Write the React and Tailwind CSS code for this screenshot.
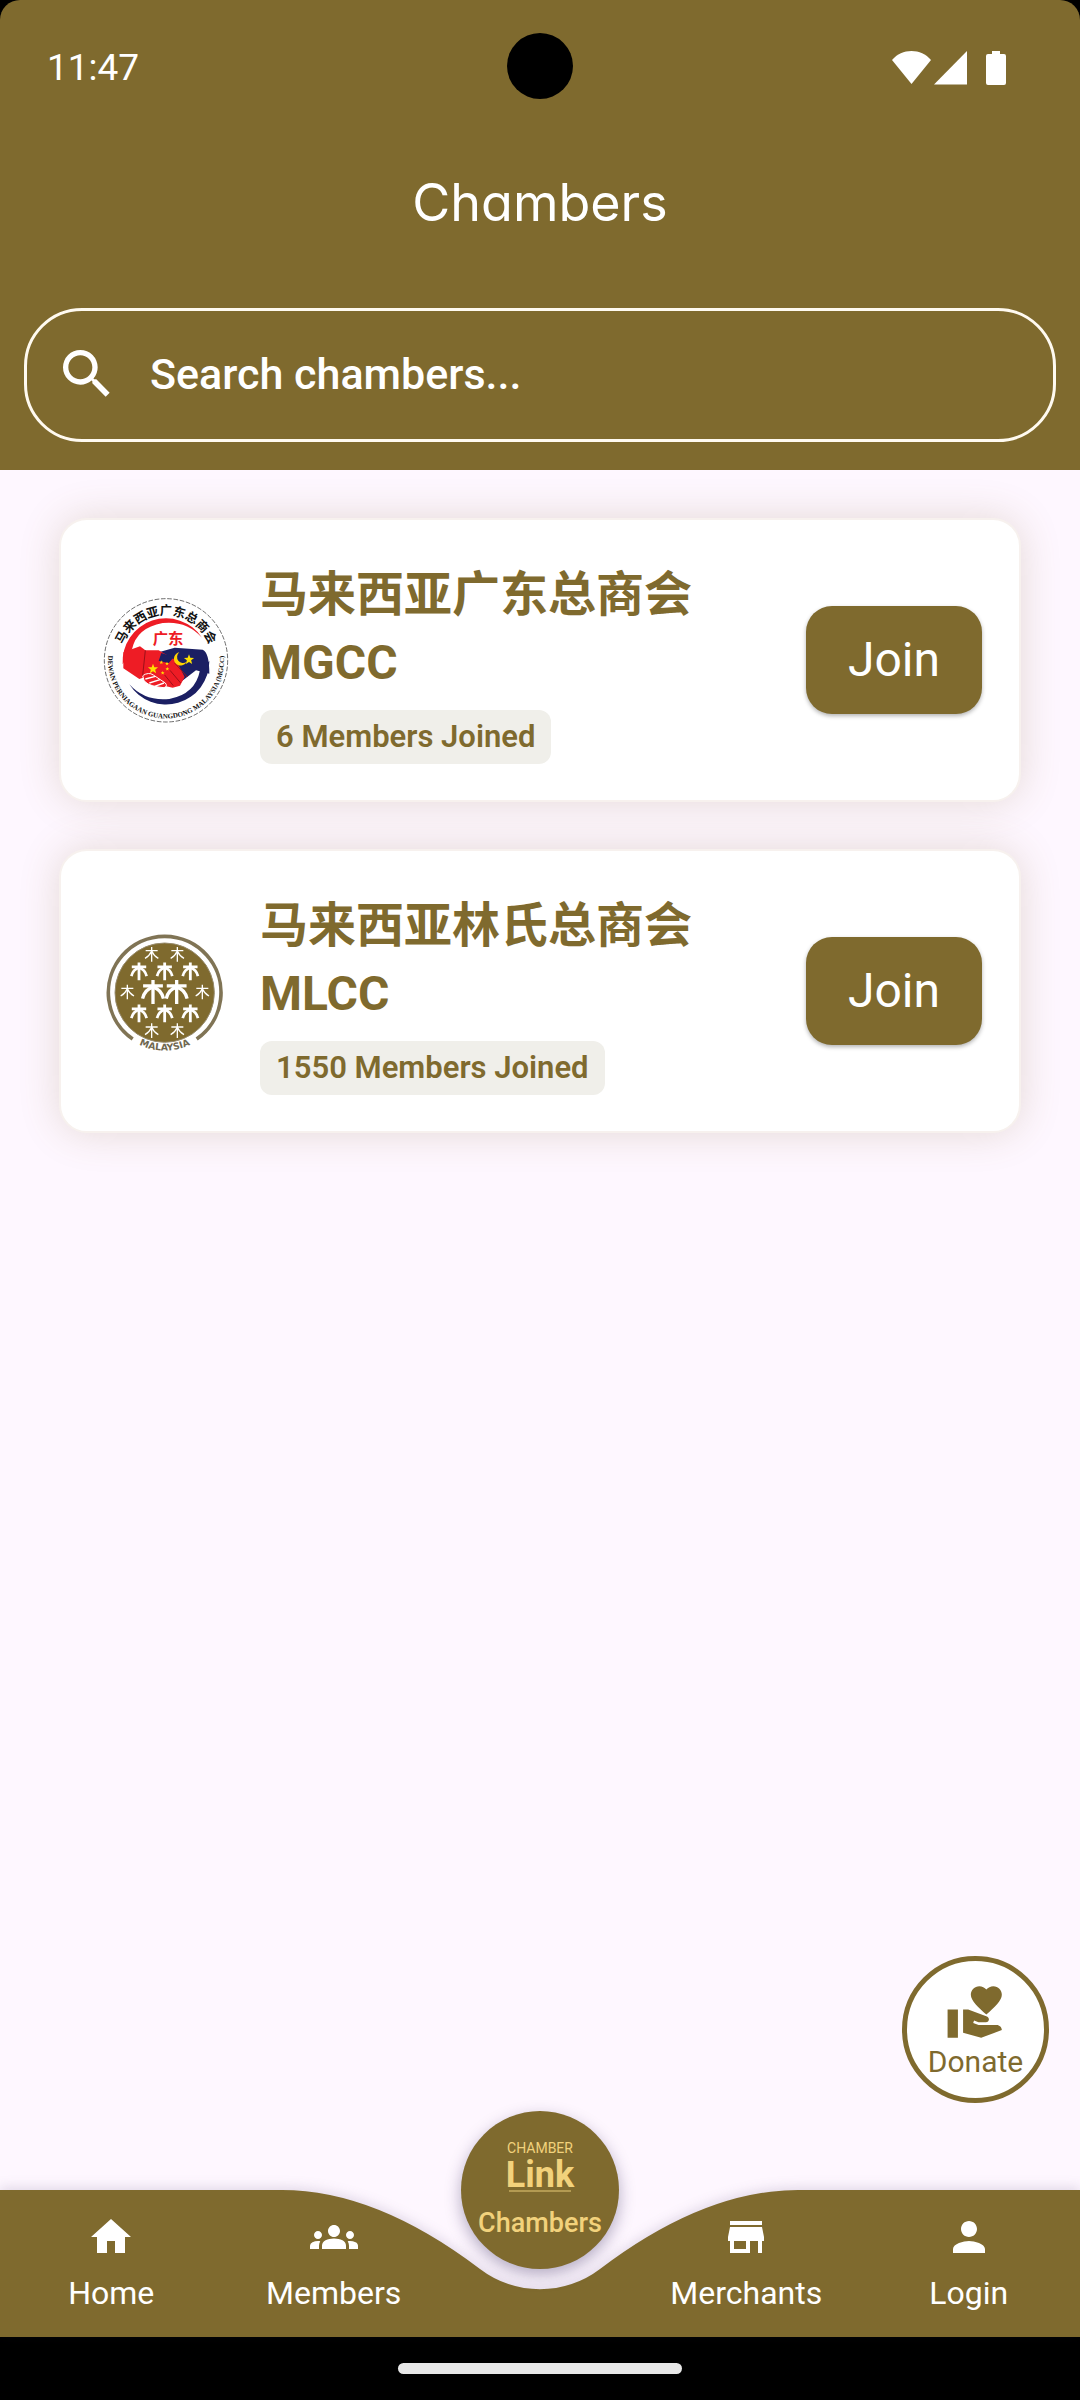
import React, { useState } from "react";
import {
  MdGroups,
  MdHome,
  MdPerson,
  MdSearch,
  MdStore,
  MdVolunteerActivism,
} from "react-icons/md";

const chambers = [
  {
    code: "MGCC",
    name: "马来西亚广东总商会",
    members: 6,
    Logo: GuangdongLogo,
  },
  {
    code: "MLCC",
    name: "马来西亚林氏总商会",
    members: 1550,
    Logo: LimLogo,
  },
];

function StatusIcons() {
  return (
    <svg
      viewBox="0 0 114 36"
      className="h-9 w-[114px] fill-white"
      aria-hidden="true"
    >
      {/* wifi */}
      <path d="M0 10C5 4 12 1 19.500 1S34 4 39 10L19.500 34Z" />
      {/* signal */}
      <path d="M42 34.500L75 1V34.500Z" />
      {/* battery */}
      <path d="M100 1h8v3h4q2 0 2 2v27q0 2-2 2H96q-2 0-2-2V6q0-2 2-2h4Z" />
    </svg>
  );
}

function Star({ x, y, r }) {
  const points = [];
  for (let i = 0; i < 10; i++) {
    const d = i % 2 ? r * 0.42 : r;
    const a = (Math.PI / 5) * i - Math.PI / 2;
    points.push(`${x + d * Math.cos(a)},${y + d * Math.sin(a)}`);
  }
  return <polygon points={points.join(" ")} fill="#ffe100" />;
}

function GuangdongLogo() {
  return (
    <svg viewBox="39 48 378 378" className="size-[126px] shrink-0">
      <defs>
        <path id="mgcc-top" d="M90 240A138 138 0 0 1 366 240" />
        <path id="mgcc-bottom" d="M60 193A174 174 0 1 0 396 193" />
      </defs>
      <circle
        cx="228"
        cy="238"
        r="185"
        fill="#fff"
        stroke="#222"
        strokeWidth="2"
        strokeDasharray="14 5"
      />

      {/* Crescents */}
      <path
        d="M98 250A130 130 0 0 1 336 170Q290 118 218 126Q140 140 126 205Z"
        fill="#ee1c25"
      />
      <path
        d="M358 240A130 130 0 0 1 118 310Q165 362 238 354Q316 340 330 268Z"
        fill="#1b1f63"
      />

      {/* Sleeves and hands */}
      <path
        d="M206 214L254 200L338 206Q358 214 358 278L318 268L276 300L236 270Z"
        fill="#1b1f63"
      />
      <path
        d="M100 214L150 196L166 208L206 208L258 238L284 288L270 314L248 320L222 314L176 284L148 294L100 262Z"
        fill="#ee1c25"
      />
      <path d="M214 216L252 228L236 246L206 240Z" fill="#1b1f63" />
      <path
        d="M158 284q18-12 32-2l36 24q8 10-4 14l-18-2q-34-6-42-20Z"
        fill="#ee1c25"
        stroke="#fff"
        strokeWidth="3"
      />
      <path
        d="M166 294l30-8M178 306l32-10M194 316l28-10"
        stroke="#fff"
        strokeWidth="4"
      />
      <path
        d="M254 246l38 42M240 268l32 38M224 282l26 32M166 208l-8 76"
        stroke="#9d1018"
        strokeWidth="3"
        fill="none"
      />
      <Star x={189} y={264} r={16} />
      <Star x={214} y={244} r={6} />
      <Star x={231} y={248} r={6} />
      <Star x={232} y={264} r={6} />
      <Star x={218} y={276} r={6} />
      <path d="M268 214a20 20 0 1 0 22 28a17 17 0 1 1-22-28Z" fill="#ffd200" />
      <Star x={297} y={236} r={16} />

      <text
        x="234"
        y="189"
        textAnchor="middle"
        fontSize="46"
        fontWeight="700"
        fill="#ee1c25"
        className="font-['Noto_Sans_CJK_SC',sans-serif]"
      >
        广东
      </text>
      <text
        fontSize="37"
        fontWeight="700"
        fill="#111"
        textAnchor="middle"
        className="font-['Noto_Sans_CJK_SC',sans-serif]"
      >
        <textPath href="#mgcc-top" startOffset="50%">
          马来西亚广东总商会
        </textPath>
      </text>
      <text
        fontSize="21"
        fontWeight="700"
        fill="#111"
        textAnchor="middle"
        className="font-['Liberation_Serif',serif]"
      >
        <textPath href="#mgcc-bottom" startOffset="50%">
          DEWAN PERNIAGAAN GUANGDONG MALAYSIA (MGCC)
        </textPath>
      </text>
    </svg>
  );
}

// One tree of the emblem; palm trees have drooping boughs
function Tree({ x, y, s, w, palm }) {
  return (
    <g
      transform={`translate(${x} ${y}) scale(${s})`}
      stroke="#fff"
      strokeWidth={w}
      fill="none"
    >
      <path d="M0-22V22M-18-11H18" />
      {palm ? (
        <path d="M-19 12Q-15-5 0-9Q15-5 19 12" />
      ) : (
        <path d="M0-10Q-6 4-20 12M0-10Q6 4 20 12" />
      )}
    </g>
  );
}

function LimLogo() {
  const small = [[185, 114], [262, 114], [112, 227], [337, 227], [185, 343], [262, 343]];
  const palms = [[147, 165], [224, 165], [301, 165], [147, 291], [224, 291], [301, 291]];

  return (
    <svg viewBox="39 35 378 378" className="size-[126px] shrink-0">
      <defs>
        <path id="mlcc-bottom" d="M100 350A172 172 0 0 0 348 350" />
      </defs>
      <path
        d="M128 368A169 169 0 1 1 320 368"
        fill="none"
        stroke="#807455"
        strokeWidth="11"
      />
      <circle cx="224" cy="229" r="149" fill="#7f6a2e" stroke="#968a6c" strokeWidth="3" />
      {small.map(([x, y]) => (
        <Tree key={`${x}-${y}`} x={x} y={y} s={1} w={4} />
      ))}
      {palms.map(([x, y]) => (
        <Tree key={`${x}-${y}`} x={x} y={y} s={1.2} w={7} palm />
      ))}
      <Tree x={189} y={227} s={1.65} w={6} palm />
      <Tree x={260} y={227} s={1.65} w={6} palm />
      <text
        fontSize="28"
        fontWeight="700"
        fill="#6f6850"
        textAnchor="middle"
        className="font-['DejaVu_Sans',sans-serif]"
      >
        <textPath href="#mlcc-bottom" startOffset="50%">
          MALAYSIA
        </textPath>
      </text>
    </svg>
  );
}

function ChamberLinkLogo() {
  return (
    <svg
      viewBox="0 0 72 54"
      className="h-[54px] w-[72px] overflow-visible fill-[#f2d27c] font-[Roboto,sans-serif]"
    >
      <text x="36" y="14" textAnchor="middle" fontSize="14">
        CHAMBER
      </text>
      <text x="36" y="48" textAnchor="middle" fontSize="36" fontWeight="700">
        Link
      </text>
      <path d="M5 52H67" stroke="#b39a52" strokeWidth="2" />
    </svg>
  );
}

function ChamberCard({ chamber }) {
  const { code, name, members, Logo } = chamber;

  return (
    <li className="flex items-center rounded-[28px] border-2 border-[#f7f1ee] bg-white py-9 pr-[37px] pl-[42px] shadow-[0_0_40px_rgba(127,98,46,0.2)]">
      <Logo />

      <div className="ml-[31px] min-w-0 flex-1 pt-[5px]">
        <h2 className="text-[48px] leading-[68px] font-bold">
          <span className="block">{name}</span>
          <span className="block">{code}</span>
        </h2>
        <p className="mt-[13px] inline-block rounded-xl bg-[#f0efea] px-4 text-[31px] leading-[54px] font-semibold">
          {members} Members Joined
        </p>
      </div>

      <button
        type="button"
        className="h-[108px] w-[176px] rounded-[26px] bg-[#7f6a2e] text-[48px] text-white shadow-[0_2px_4px_rgba(0,0,0,0.3)]"
      >
        Join
      </button>
    </li>
  );
}

function NavItem({ icon: Icon, label }) {
  return (
    <a href="#" className="flex flex-1 flex-col items-center pt-[23px] text-white">
      <Icon className="size-12" />
      <span className="mt-3 text-[32px] leading-[40px]">{label}</span>
    </a>
  );
}

function BottomNav() {
  return (
    <nav className="relative flex h-[147px] bg-[#fef7ff]">
      {/* Bar with the scooped-out middle */}
      <div className="absolute inset-0 flex drop-shadow-[0_-3px_6px_rgba(60,40,90,0.14)]">
        <div className="flex-1 bg-[#7f6a2e]" />
        <svg viewBox="0 0 516 147" className="h-full w-[516px] fill-[#7f6a2e]">
          <path d="M0 0Q94 0 198 79A99 99 0 0 0 318 79Q422 0 516 0V147H0Z" />
        </svg>
        <div className="flex-1 bg-[#7f6a2e]" />
      </div>

      <div className="relative flex flex-1">
        <NavItem icon={MdHome} label="Home" />
        <NavItem icon={MdGroups} label="Members" />
        <div className="w-[190px]" />
        <NavItem icon={MdStore} label="Merchants" />
        <NavItem icon={MdPerson} label="Login" />
      </div>

      <a
        href="#"
        className="absolute -top-[79px] left-1/2 flex size-[158px] -translate-x-1/2 flex-col items-center rounded-full bg-[#7f6a2e] pt-7 shadow-[0_6px_16px_rgba(40,30,80,0.35)]"
      >
        <ChamberLinkLogo />
        <span className="mt-[15px] text-[27px] leading-[30px] font-medium text-[#f2d27c]">
          Chambers
        </span>
      </a>
    </nav>
  );
}

export default function App() {
  const [query, setQuery] = useState("");

  const visible = chambers.filter((c) =>
    `${c.name} ${c.code}`.toLowerCase().includes(query.toLowerCase())
  );

  return (
    <div className="flex min-h-screen flex-col bg-black font-[Roboto,'Noto_Sans_CJK_SC',sans-serif] text-[#7f6a2e]">
      <header className="rounded-t-[20px] bg-[#7f6a2e] px-6 pb-7 text-white">
        {/* Status bar */}
        <div className="relative flex h-[136px] items-center justify-between pr-[50px] pl-[23px]">
          <span className="text-[37px]">11:47</span>
          <span className="absolute top-[33px] left-1/2 size-[66px] -translate-x-1/2 rounded-full bg-black" />
          <StatusIcons />
        </div>

        <h1 className="text-center font-[Inter,sans-serif] text-[52px] leading-[134px] font-normal [font-feature-settings:'cv11']">
          Chambers
        </h1>

        <label className="mt-[38px] flex h-[134px] items-center rounded-[58px] border-3 border-[#fffaf0] pr-8 pb-[2px] pl-7">
          <MdSearch className="size-16 shrink-0" />
          <input
            type="text"
            aria-label="Search chambers"
            placeholder="Search chambers..."
            value={query}
            onChange={(e) => setQuery(e.target.value)}
            className="ml-[31px] min-w-0 flex-1 bg-transparent text-[43px] font-medium outline-none placeholder:text-white"
          />
        </label>
      </header>

      <main className="relative flex-1 overflow-hidden bg-[#fef7ff] px-[59px] pt-12">
        <ul className="flex flex-col gap-[47px]">
          {visible.map((c) => (
            <ChamberCard key={c.code} chamber={c} />
          ))}
        </ul>

        <button
          type="button"
          className="absolute right-[31px] bottom-[87px] flex size-[147px] flex-col items-center rounded-full border-5 border-[#7f6a2e] bg-white pt-5 text-[30px] leading-[38px]"
        >
          <MdVolunteerActivism className="size-[62px]" />
          Donate
        </button>
      </main>

      <BottomNav />

      {/* Gesture bar */}
      <div className="flex h-[63px] justify-center bg-black pt-[26px]">
        <div className="h-[11px] w-[284px] rounded-full bg-[#e8e8e8]" />
      </div>
    </div>
  );
}
